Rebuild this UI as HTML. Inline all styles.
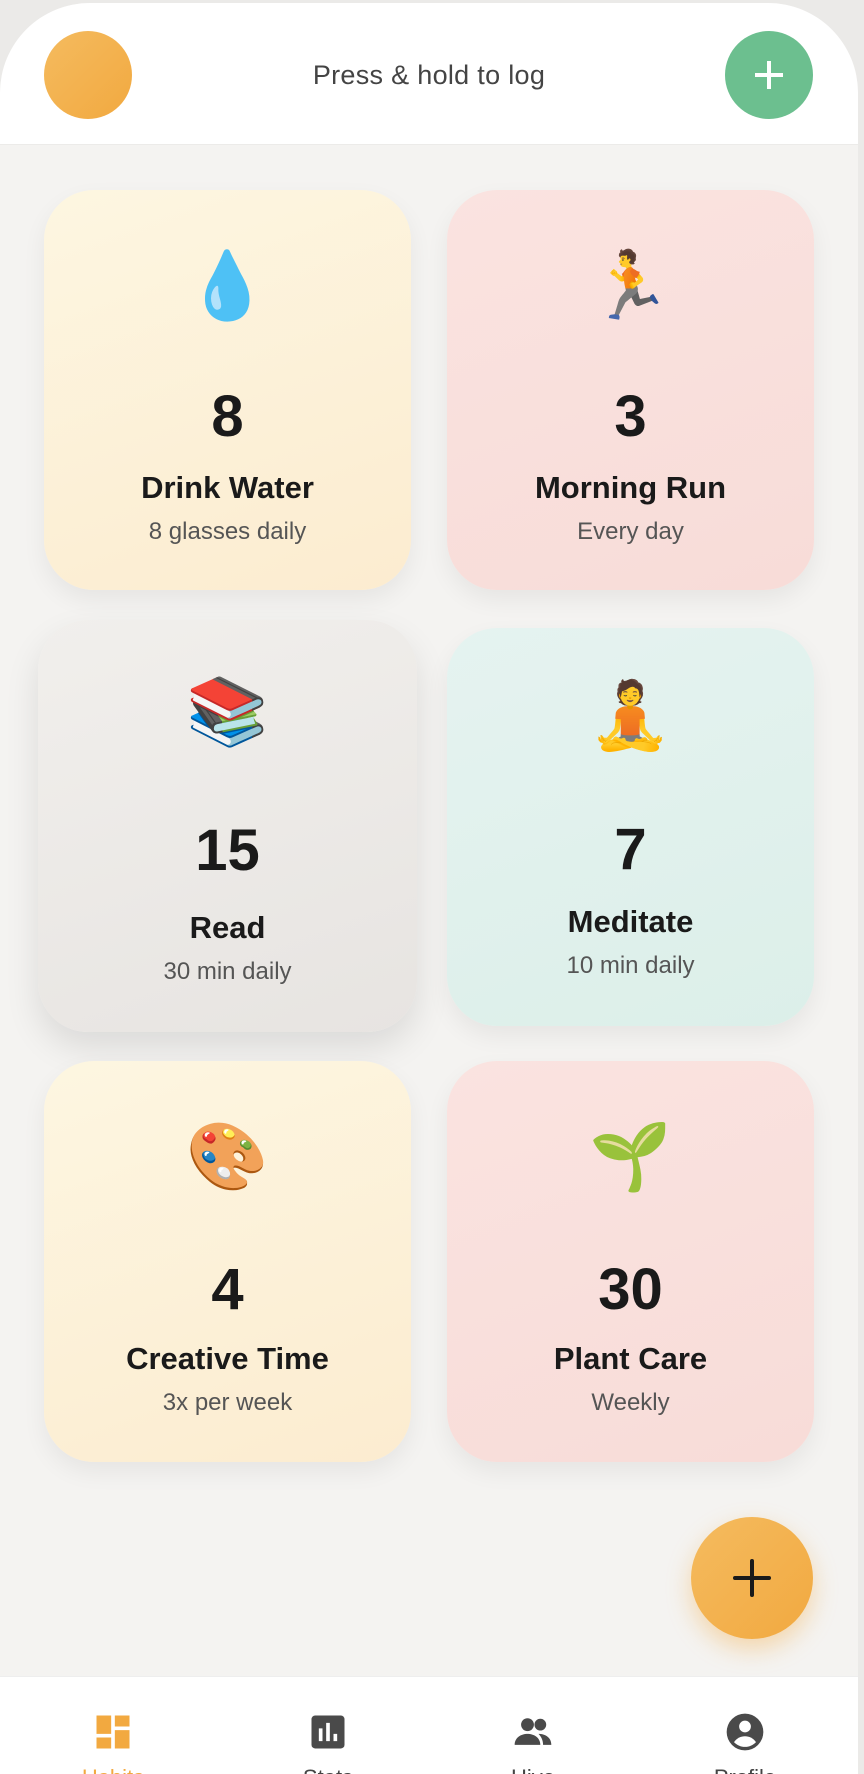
<!DOCTYPE html>
<html><head><meta charset="utf-8"><style>
*{margin:0;padding:0;box-sizing:border-box}
body{width:864px;height:1774px;background:#ebeae8;font-family:"Liberation Sans","Noto Sans CJK SC",sans-serif;position:relative;overflow:hidden}
.app{position:absolute;left:0;top:3px;width:858px;height:1771px;background:#f4f3f1;border-radius:90px 90px 0 0;overflow:hidden}
.hdr{position:absolute;left:0;top:0;width:858px;height:142px;background:#fff;border-bottom:1px solid #ecebe9}
.av{position:absolute;left:44px;top:28px;width:88px;height:88px;border-radius:50%;background:linear-gradient(135deg,#f4bb5f,#f2a940)}
.add{position:absolute;left:725px;top:28px;width:88px;height:88px;border-radius:50%;background:#6cbf8f}
.ht{position:absolute;left:0;width:858px;top:57px;text-align:center;font-size:27px;color:#444;letter-spacing:.3px}
.card{position:absolute;border-radius:50px;text-align:center;box-shadow:0 10px 24px rgba(0,0,0,.06)}
.y{background:linear-gradient(160deg,#fdf6e1,#fcecd0)}
.p{background:linear-gradient(160deg,#fae3e0,#f8dcd8)}
.g{background:linear-gradient(160deg,#f1efec,#e7e4e1);box-shadow:0 16px 34px rgba(0,0,0,.1)}
.t{background:linear-gradient(160deg,#e5f3f0,#dcefe9)}
.e{position:absolute;left:0;right:0;font-size:66px;line-height:1;font-family:"Noto Color Emoji","DejaVu Sans",sans-serif}
.n{position:absolute;left:0;right:0;font-size:58px;font-weight:bold;color:#1a1a1a}
.tt{position:absolute;left:0;right:0;font-size:31px;font-weight:bold;color:#1a1a1a}
.s{position:absolute;left:0;right:0;font-size:24px;color:#555}
.fab{position:absolute;left:691px;top:1514px;width:122px;height:122px;border-radius:50%;background:linear-gradient(135deg,#f4bb5f,#f2a940);box-shadow:0 10px 24px rgba(242,169,64,.4)}
.nav{position:absolute;left:0;top:1673px;width:858px;height:110px;background:#fff;border-top:1px solid #eee}
.ni{position:absolute;top:33px;width:44px;height:44px}
.nl{position:absolute;top:88px;width:120px;text-align:center;font-size:22px;color:#444}
</style></head><body>
<div class="app">
<div class="hdr"><div class="av"></div><div class="ht">Press &amp; hold to log</div><div class="add"><svg width="88" height="88" viewBox="0 0 88 88"><path d="M44 30v28M30 44h28" stroke="#fff" stroke-width="4"/></svg></div></div>

<div class="card y" style="left:44px;top:187px;width:367px;height:400px">
<div class="e" style="top:64px">💧</div><div class="n" style="top:193px">8</div><div class="tt" style="top:280px">Drink Water</div><div class="s" style="top:328px">8 glasses daily</div></div>
<div class="card p" style="left:447px;top:187px;width:367px;height:400px">
<div class="e" style="top:64px">🏃</div><div class="n" style="top:193px">3</div><div class="tt" style="top:280px">Morning Run</div><div class="s" style="top:328px">Every day</div></div>
<div class="card g" style="left:38px;top:617px;width:379px;height:412px">
<div class="e" style="top:60px">📚</div><div class="n" style="top:197px">15</div><div class="tt" style="top:290px">Read</div><div class="s" style="top:338px">30 min daily</div></div>
<div class="card t" style="left:447px;top:625px;width:367px;height:398px">
<div class="e" style="top:56px">🧘</div><div class="n" style="top:188px">7</div><div class="tt" style="top:276px">Meditate</div><div class="s" style="top:324px">10 min daily</div></div>
<div class="card y" style="left:44px;top:1058px;width:367px;height:401px">
<div class="e" style="top:64px">🎨</div><div class="n" style="top:195px">4</div><div class="tt" style="top:280px">Creative Time</div><div class="s" style="top:328px">3x per week</div></div>
<div class="card p" style="left:447px;top:1058px;width:367px;height:401px">
<div class="e" style="top:64px">🌱</div><div class="n" style="top:195px">30</div><div class="tt" style="top:280px">Plant Care</div><div class="s" style="top:328px">Weekly</div></div>

<div class="fab"><svg width="122" height="122" viewBox="0 0 122 122"><path d="M61 44v34M44 61h34" stroke="#1a1a1a" stroke-width="4" stroke-linecap="round"/></svg></div>

<div class="nav">
<svg class="ni" style="left:91px" viewBox="0 0 24 24"><path fill="#f2a940" d="M3 3h8v10H3zM13 3h8v6h-8zM13 11h8v10h-8zM3 15h8v6H3z"/></svg>
<svg class="ni" style="left:306px" viewBox="0 0 24 24"><rect x="3" y="3" width="18" height="18" rx="2" fill="#4a4a4a"/><path d="M8 10v7M12 7v10M16 13v4" stroke="#fff" stroke-width="2"/></svg>
<svg class="ni" style="left:511px" viewBox="0 0 24 24"><circle cx="9" cy="8" r="3.5" fill="#4a4a4a"/><circle cx="16" cy="8" r="3.2" fill="#4a4a4a"/><path fill="#4a4a4a" d="M2 19c0-4 3.5-6 7-6s7 2 7 6zM15 13c3 0 7 1.5 7 6h-4.5c0-2.5-1-4.5-2.5-6z"/></svg>
<svg class="ni" style="left:723px" viewBox="0 0 24 24"><circle cx="12" cy="12" r="10" fill="#4a4a4a"/><circle cx="12" cy="9" r="3.2" fill="#fff"/><path fill="#fff" d="M6 17.5c1.5-2.2 3.8-3.2 6-3.2s4.5 1 6 3.2c-1.6 1.7-3.7 2.6-6 2.6s-4.4-.9-6-2.6z"/></svg>
<div class="nl" style="left:53px;color:#f2a940">Habits</div>
<div class="nl" style="left:268px">Stats</div>
<div class="nl" style="left:473px">Hive</div>
<div class="nl" style="left:685px">Profile</div>
</div>
</div>
</body></html>
